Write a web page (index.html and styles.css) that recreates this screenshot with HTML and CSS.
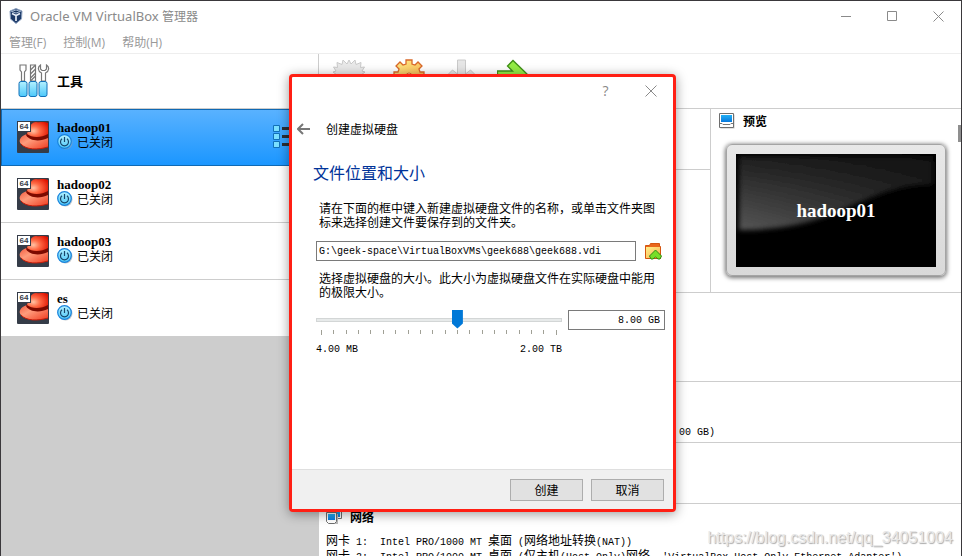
FILE: index.html
```html
<!DOCTYPE html>
<html lang="zh-CN">
<head>
<meta charset="utf-8">
<title>Oracle VM VirtualBox 管理器</title>
<link rel="stylesheet" href="styles.css">
</head>
<body>
<svg class="defs" width="0" height="0" aria-hidden="true">
  <defs>
    <radialGradient id="hatTop" cx=".3" cy=".6" r=".8"><stop offset="0" stop-color="#ffc3a5"/><stop offset=".4" stop-color="#ff6a45"/><stop offset="1" stop-color="#e01200"/></radialGradient>
    <linearGradient id="hatBrim" x1="0" y1="0" x2="1" y2="1"><stop offset="0" stop-color="#f4553a"/><stop offset=".4" stop-color="#ff9c7c"/><stop offset="1" stop-color="#f03c20"/></linearGradient>
    <linearGradient id="cyan" x1="0" y1="0" x2="0" y2="1"><stop offset="0" stop-color="#b4f1ff"/><stop offset="1" stop-color="#4cc8fa"/></linearGradient>
    <linearGradient id="gold" x1="0" y1="0" x2="1" y2="1"><stop offset="0" stop-color="#fff08a"/><stop offset="1" stop-color="#f9b04d"/></linearGradient>
    <linearGradient id="screen" x1="0" y1="0" x2="0" y2="1"><stop offset="0" stop-color="#22b0f5"/><stop offset="1" stop-color="#0878dc"/></linearGradient>
    <symbol id="hat" viewBox="0 0 32 32">
      <rect width="32" height="32" rx="1" fill="#353c48"/>
      <path d="M10 13C3 15 1 20 4 23c5 6 17 6 27 3V12z" fill="url(#hatBrim)"/>
      <path d="M4 23c5 6 17 6 27 3" fill="none" stroke="#c91a06"/>
      <path d="M9 14c3 6 14 7 22 3v-5H10z" fill="#7d0a00"/>
      <path d="M10 13C12 5 15 1 19 1c4 1 8-1 12 1v11c-7 4-16 4-21 0z" fill="url(#hatTop)"/>
      <rect x=".5" y=".5" width="13" height="10" fill="#fff" stroke="#353c48"/>
      <text x="7" y="8" class="hat-label">64</text>
    </symbol>
    <symbol id="power" viewBox="0 0 16 16">
      <circle cx="8.500" cy="8.500" r="7" fill="#9aa4ab" opacity=".6"/>
      <circle cx="7.500" cy="7.500" r="6.800" fill="url(#cyan)" stroke="#1682dc" stroke-width="1.200"/>
      <path d="M5 4.800a4 4 0 1 0 5 0M7.500 3v5" fill="none" stroke="#17456b" stroke-width="1.200"/>
    </symbol>
  </defs>
</svg>

<div class="window">
  <header class="titlebar">
    <svg width="14" height="16" viewBox="0 0 14 16" aria-hidden="true">
      <path d="M7 .5l6 2.500-.5 8L7 15.500 1.500 11 1 3z" fill="#1d3a68" stroke="#8fa3c2"/>
      <path d="M2.500 3.500L7 2l4.500 1.500L7 5z" fill="#17335e" stroke="#c4d4e8" stroke-width=".8"/>
      <path d="M3 5.500l4 2 4-2M7 7.500V13" fill="none" stroke="#e7eef8" stroke-width="1.700"/>
    </svg>
    <h1>Oracle VM VirtualBox <span>管理器</span></h1>
    <div class="window-buttons">
      <button type="button" aria-label="最小化"><svg width="11" height="11" viewBox="0 0 11 11"><path d="M0 5.500h10"/></svg></button>
      <button type="button" aria-label="最大化"><svg width="11" height="11" viewBox="0 0 11 11"><path d="M.5.5h9v9h-9z"/></svg></button>
      <button type="button" aria-label="关闭"><svg width="11" height="11" viewBox="0 0 11 11"><path d="M.5.500l10 10M10.500.500l-10 10"/></svg></button>
    </div>
  </header>
  <nav class="menubar">
    <button type="button">管理(F)</button>
    <button type="button">控制(M)</button>
    <button type="button">帮助(H)</button>
  </nav>

  <div class="workspace">
    <aside class="sidebar">
      <div class="tools">
        <svg width="32" height="34" viewBox="0 0 32 34" aria-hidden="true">
          <g fill="#fff" stroke="#777" stroke-width="1.200">
            <path d="M2 1h6v5L6.500 8v9h-3V8L2 6z"/>
            <path d="M12.500 1h5v16h-5z"/>
            <path d="M12.500 6l5-5m-5 9l5-5m-5 9l5-5m-5 8l5-5"/>
            <path d="M22.500 1c-3 2-3 6 1 8v8h4V9c4-2 4-6 1-8v4l-1.500 1.500h-3L22.500 5z"/>
          </g>
          <g fill="url(#cyan)" stroke="#1271b9">
            <rect x="1" y="17.500" width="8" height="15" rx="2"/>
            <rect x="11" y="17.500" width="8" height="15" rx="2"/>
            <rect x="21" y="17.500" width="8" height="15" rx="2"/>
          </g>
        </svg>
        <h2>工具</h2>
      </div>
      <ul class="machines">
        <li class="machine selected">
          <svg width="32" height="32"><use href="#hat"/></svg>
          <div class="machine-text"><b>hadoop01</b><span class="state"><svg width="16" height="16"><use href="#power"/></svg>已关闭</span></div>
          <svg class="machine-menu" width="26" height="26" viewBox="0 0 26 26" aria-hidden="true">
            <path d="M9 4.500h16M9 12.500h16M9 20.500h16" stroke="#2b2f36" stroke-width="3"/>
            <g fill="#7be0ff" stroke="#1271b9"><path d="M.5 1.500h6v6h-6zM.5 9.500h6v6h-6zM.5 17.500h6v6h-6z"/></g>
          </svg>
        </li>
        <li class="machine">
          <svg width="32" height="32"><use href="#hat"/></svg>
          <div class="machine-text"><b>hadoop02</b><span class="state"><svg width="16" height="16"><use href="#power"/></svg>已关闭</span></div>
        </li>
        <li class="machine">
          <svg width="32" height="32"><use href="#hat"/></svg>
          <div class="machine-text"><b>hadoop03</b><span class="state"><svg width="16" height="16"><use href="#power"/></svg>已关闭</span></div>
        </li>
        <li class="machine">
          <svg width="32" height="32"><use href="#hat"/></svg>
          <div class="machine-text"><b>es</b><span class="state"><svg width="16" height="16"><use href="#power"/></svg>已关闭</span></div>
        </li>
      </ul>
    </aside>

    <main class="content">
      <div class="toolbar">
        <svg width="32" height="32" viewBox="0 0 32 32" aria-hidden="true"><path d="M16 1l2 4 4-4 1 4.500 5-2-.5 5 4-.5-2.500 4 3 1-4 3 4 2-4 2 2 4H2l2-4-4-2 4-2-4-3 3-1L.5 8l4 .5-.5-5 5 2L10 1l4 4z" fill="#e9e9e9" stroke="#cacaca"/></svg>
        <svg width="32" height="32" viewBox="0 0 32 32" aria-hidden="true"><path d="M13 1h6v4l3 1 3-3 4 4-3 3 1 3h4v6H1v-6h4l1-3-3-3 4-4 3 3 3-1z" fill="url(#gold)" stroke="#d9692a" stroke-width="1.300"/><circle cx="16" cy="17" r="3" fill="#fff" stroke="#d9692a"/></svg>
        <svg width="32" height="32" viewBox="0 0 32 32" aria-hidden="true"><path d="M12.500 1h8v14l5-4 5 5-14 14-14-14 5-5 5 4z" fill="#e6e6e6" stroke="#cacaca"/></svg>
        <svg width="32" height="32" viewBox="0 0 32 32" aria-hidden="true"><path d="M.5 12h15l-5-5L16 1.500 31 16 16 30V20H.5z" fill="#93ec45" stroke="#3f8f17" stroke-width="1.300"/></svg>
      </div>
      <div class="overview">
        <div class="overview-info"><section></section><section></section></div>
        <section class="preview">
          <h2>
            <svg width="16" height="16" viewBox="0 0 16 16" aria-hidden="true"><path d="M1.500 1.500h14v14h-14z" fill="#c4c4c4"/><path d="M.5.5h14v14H.5z" fill="#fff" stroke="#6e6e6e"/><path d="M2 2h11v7H2z" fill="url(#screen)"/><path d="M1 10.500h2l1 1h7l1-1h2" fill="none" stroke="#777"/></svg>
            预览
          </h2>
          <div class="monitor">
            <div class="monitor-screen">
              <svg class="glare" viewBox="0 0 200 113" preserveAspectRatio="none" aria-hidden="true">
                <defs><linearGradient id="glare" x1="0" y1="0" x2="0" y2="1"><stop offset="0" stop-color="#1e1e1e"/><stop offset="1" stop-color="#565656"/></linearGradient>
                <linearGradient id="shade" x1="0" y1="0" x2="1" y2="0"><stop offset="0" stop-color="#000" stop-opacity="0"/><stop offset="1" stop-color="#000" stop-opacity=".5"/></linearGradient>
                <filter id="soft"><feGaussianBlur stdDeviation="2.500"/></filter></defs>
                <g filter="url(#soft)"><path d="M3 2h194v28C120 32 110 76 3 76z" fill="url(#glare)"/><path d="M3 2h194v28C120 32 110 76 3 76z" fill="url(#shade)"/></g>
              </svg>
              <span>hadoop01</span>
            </div>
          </div>
        </section>
      </div>
      <section class="details system"></section>
      <section class="details storage"><p class="latin">00 GB)</p></section>
      <section class="details audio"></section>
      <section class="details network">
        <h2>
          <svg width="16" height="16" viewBox="0 0 16 16" aria-hidden="true"><path d="M5.500.5h10v9h-10z" fill="#fff" stroke="#6e6e6e"/><path d="M7 2h7v6H7z" fill="url(#screen)"/><path d="M2 5h10v10H4z" fill="#b9b9b9"/><path d="M.5 3.500h10v9l-2 2h-6l-2-2z" fill="#fff" stroke="#6e6e6e"/><path d="M2 5h7v6H2z" fill="url(#screen)"/></svg>
          网络
        </h2>
        <p>网卡<span class="latin"> 1:  Intel PRO/1000 MT </span>桌面<span class="latin"> (</span>网络地址转换<span class="latin">(NAT))</span></p>
        <p>网卡<span class="latin"> 2:  Intel PRO/1000 MT </span>桌面<span class="latin"> (</span>仅主机<span class="latin">(Host-Only)</span>网络<span class="latin">, 'VirtualBox Host-Only Ethernet Adapter')</span></p>
      </section>
      <div class="scroll-thumb"></div>
      <div class="watermark">https://blog.csdn.net/qq_34051004</div>
    </main>
  </div>

  <form class="dialog" role="dialog" aria-labelledby="dialog-title">
    <div class="dialog-controls">
      <button type="button" aria-label="帮助">?</button>
      <button type="button" aria-label="关闭"><svg width="12" height="12" viewBox="0 0 12 12"><path d="M.5.5l11 11M11.500.5l-11 11"/></svg></button>
    </div>
    <div class="dialog-title">
      <button type="button" aria-label="返回"><svg width="13" height="12" viewBox="0 0 13 12"><path d="M1 6h12M6 1L1 6l5 5" fill="none" stroke="#777" stroke-width="2"/></svg></button>
      <h2 id="dialog-title">创建虚拟硬盘</h2>
    </div>
    <div class="dialog-body">
      <h3>文件位置和大小</h3>
      <label class="hint" for="path">请在下面的框中键入新建虚拟硬盘文件的名称，或单击文件夹图标来选择创建文件要保存到的文件夹。</label>
      <div class="path-row">
        <input id="path" class="latin" type="text" value="G:\geek-space\VirtualBoxVMs\geek688\geek688.vdi">
        <button type="button" aria-label="选择文件夹"><svg width="17" height="17" viewBox="0 0 17 17"><path d="M.5 15.500V2.500h4l1-2h9v3h1v12z" fill="#e9661b" stroke="#d5540f"/><path d="M1 4h14v11H1z" fill="url(#gold)"/><path d="M10.500 7l6 6-1.500 3h-2l-2.500-2L8 16H6l-1.500-3z" fill="#77df28" stroke="#2f8a12"/></svg></button>
      </div>
      <label class="hint" for="size">选择虚拟硬盘的大小。此大小为虚拟硬盘文件在实际硬盘中能用的极限大小。</label>
      <div class="size-row">
        <div class="slider">
          <input id="size" type="range" min="0" max="19" value="11">
          <div class="ticks" aria-hidden="true"><i></i><i></i><i></i><i></i><i></i><i></i><i></i><i></i><i></i><i></i><i></i><i></i><i></i><i></i><i></i><i></i><i></i><i></i><i></i><i></i></div>
          <div class="range-labels latin"><span>4.00 MB</span><span>2.00 TB</span></div>
        </div>
        <input class="size-value latin" type="text" aria-label="大小" value="8.00 GB">
      </div>
    </div>
    <footer>
      <button type="button">创建</button>
      <button type="button">取消</button>
    </footer>
  </form>
</div>
</body>
</html>
```

FILE: styles.css
```css
* { box-sizing: border-box; }
body {
  margin: 0;
  font: 12px/14px "Noto Sans CJK SC", sans-serif;
  color: #000;
}
h1, h2, h3, p, ul { margin: 0; padding: 0; font-size: inherit; }
button { padding: 0; border: 0; background: none; font: inherit; color: inherit; }
svg { display: block; flex: none; }
.defs { position: absolute; }
.latin { font-family: "Liberation Mono", monospace; font-size: 10px; line-height: 10px; white-space: pre; }

.window {
  position: relative;
  display: flex;
  flex-direction: column;
  height: 100vh;
  overflow: hidden;
  border: 1px solid #3a383b;
  border-bottom: 0;
  background: #fff;
}
.titlebar { display: flex; align-items: center; gap: 7px; height: 30px; padding-left: 8px; color: #8a8a8a; }
.titlebar h1 { flex: 1; font: 13px/20px "Noto Sans", "Noto Sans CJK SC", sans-serif; }
.titlebar h1 span { font-size: 12px; }
.window-buttons { display: flex; }
.window-buttons button { display: grid; place-items: center; width: 46px; height: 28px; }
.window-buttons svg, .dialog-controls svg { fill: none; stroke: #8a8a8a; }
.menubar {
  display: flex;
  gap: 17px;
  height: 23px;
  padding: 0 8px;
  border-bottom: 1px solid #eee;
  font: 12px/24px "Open Sans", "Noto Sans CJK SC", sans-serif;
  color: #999;
}

.workspace { display: flex; flex: 1; min-height: 0; }
.sidebar { width: 318px; flex: none; border-right: 1px solid #cdcdcd; background: #cdcdcd; }
.tools {
  display: flex;
  align-items: center;
  gap: 7px;
  height: 55px;
  padding-left: 17px;
  border-bottom: 1px solid #cdcdcd;
  background: #fff;
}
.tools h2 { font-size: 13px; }
.machines { list-style: none; }
.machine {
  display: flex;
  align-items: center;
  gap: 8px;
  height: 57px;
  padding: 0 18px 0 16px;
  border-bottom: 1px solid #cdcdcd;
  background: #fff;
}
.machine.selected {
  border: 1px solid #0f69b4;
  padding: 0 18px 1px 15px;
  background: linear-gradient(#59b2ff, #1b96ff);
}
.machine-text { margin-bottom: 4px; }
.machine b { display: block; font: bold 13px/13px "Liberation Serif", serif; }
.state { display: flex; align-items: center; gap: 4px; height: 16px; }
.machine-menu { margin-left: auto; }
.hat-label { font: bold 8px "Liberation Sans", sans-serif; text-anchor: middle; fill: #353c48; }

.content { position: relative; flex: 1; min-width: 0; }
.toolbar { display: flex; gap: 28px; height: 55px; padding: 5px 14px; border-bottom: 1px solid #cdcdcd; }
.toolbar svg:nth-child(n+3) { margin-left: -8px; }
.overview { display: grid; grid-template-columns: 1fr 251px; height: 184px; border-bottom: 1px solid #cdcdcd; }
.overview-info { display: grid; grid-template-rows: 61px 1fr; }
.overview-info section:first-child { border-bottom: 1px solid #cdcdcd; }
.preview { padding: 3px 15px 0; border-left: 1px solid #cdcdcd; }
.content h2 { display: flex; align-items: center; gap: 8px; }
.preview h2 { margin-left: -7px; height: 17px; }
.monitor {
  height: 132px;
  margin-top: 15px;
  padding: 9px;
  border: 1px solid #a4a4a4;
  border-radius: 6px;
  background: linear-gradient(#e8e8e8, #d9d9d9);
  box-shadow: 0 1px 4px 1px #777;
}
.monitor-screen { position: relative; display: grid; place-items: center; height: 113px; background: #000; overflow: hidden; }
.glare { position: absolute; inset: 0; width: 100%; height: 100%; }
.monitor-screen span { position: relative; font: bold 19px/20px "Liberation Serif", serif; color: #fff; }
.details { padding: 0 7px; border-bottom: 1px solid #cdcdcd; }
.system { height: 89px; }
.storage { height: 61px; padding: 46px 0 0 360px; }
.audio { height: 61px; }
.network { padding-top: 6px; border: 0; white-space: nowrap; }
.network h2 { height: 14px; margin-bottom: 9px; }
.scroll-thumb { position: absolute; right: 0; top: 71px; width: 3px; height: 17px; background: #8f8f8f; }
.watermark {
  position: absolute;
  right: 8px;
  bottom: 8px;
  font: 16px/20px "Liberation Sans", sans-serif;
  color: #e8e8e8;
  text-shadow: 1px 1px 1px #aaa;
}

.dialog {
  position: absolute;
  left: 288px;
  top: 73px;
  display: flex;
  flex-direction: column;
  width: 387px;
  border: 3px solid #ff1f14;
  border-radius: 4px;
  background: #fff;
  box-shadow: 0 2px 12px #0006;
}
.dialog-controls { display: flex; justify-content: flex-end; height: 28px; color: #888; }
.dialog-controls button { display: grid; place-items: center; width: 45px; font: 14px/28px "Open Sans", sans-serif; }
.dialog-title { display: flex; align-items: center; gap: 16px; height: 48px; padding-left: 5px; }
.dialog-title h2 { font-weight: 400; }
.dialog-body { padding: 8px 8px 0 24px; height: 316px; }
.dialog-body h3 { margin-left: -3px; font-size: 16px; line-height: 22px; font-weight: 400; color: #039; }
.hint { display: block; width: 340px; margin-left: 3px; }
.dialog-body h3 + .hint { margin-top: 18px; }
.path-row { display: flex; align-items: center; gap: 9px; margin: 12px 0 10px; }
input[type="text"] { height: 20px; border: 1px solid #7a7a7a; background: #fff; padding: 0 2px; color: #000; }
.path-row input { flex: none; width: 320px; }
.size-row { display: flex; align-items: flex-start; gap: 6px; margin-top: 11px; }
.slider { flex: 1; }
input[type="range"] { display: block; appearance: none; width: 100%; height: 19px; margin: 0; background: none; }
input[type="range"]::-webkit-slider-runnable-track { height: 4px; border: 1px solid #d3d6d6; background: #e7eaea; }
input[type="range"]::-webkit-slider-thumb {
  appearance: none;
  width: 11px;
  height: 19px;
  margin-top: -9px;
  background: #0078d7;
  clip-path: polygon(0 0, 100% 0, 100% 74%, 50% 100%, 0 74%);
}
.ticks { display: flex; justify-content: space-between; height: 5px; margin: 1px 5px 0; }
.ticks i { width: 1px; height: 4px; background: #a0a096; }
.ticks i:first-child, .ticks i:last-child { height: 5px; }
.range-labels { display: flex; justify-content: space-between; margin-top: 10px; }
.size-value { width: 97px; text-align: right; }
.size-row input.size-value { padding-right: 4px; }
.dialog footer {
  display: flex;
  justify-content: flex-end;
  gap: 8px;
  height: 40px;
  padding: 9px 9px 0;
  border-top: 1px solid #dfdfdf;
  background: #f0f0f0;
}
.dialog footer button { width: 73px; height: 22px; border: 1px solid #adadad; background: #e1e1e1; }
```
